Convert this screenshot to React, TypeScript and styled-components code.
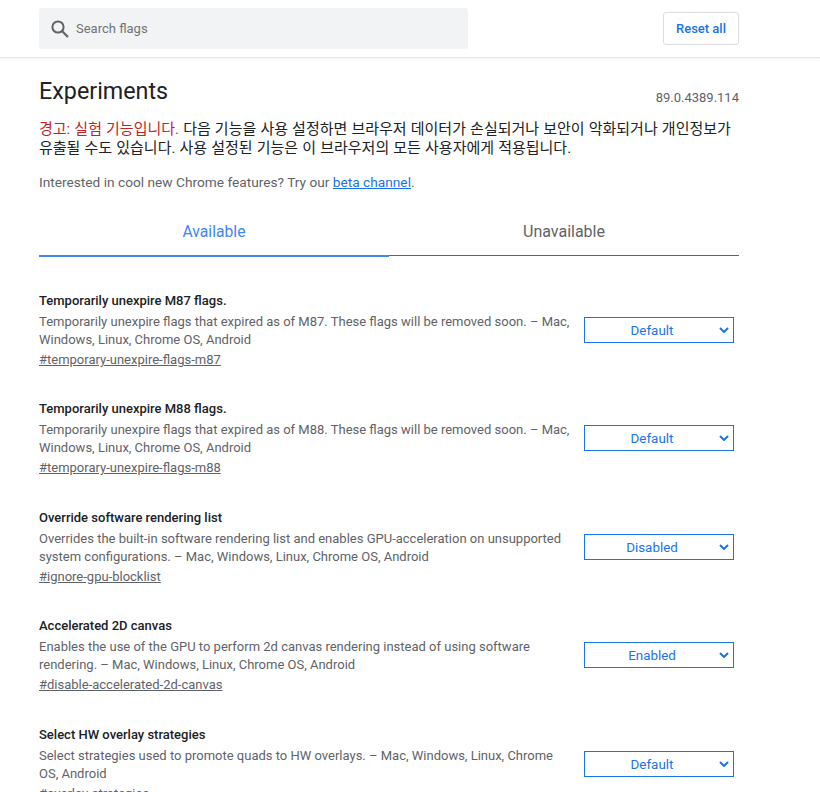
import styled, { createGlobalStyle } from "styled-components";
import { useState } from "react";

const GlobalStyle = createGlobalStyle`
  html, body {
    margin: 0;
    padding: 0;
    height: 792px;
    overflow: hidden;
    background: #fff;
    font-family: Roboto, "Noto Sans CJK KR", sans-serif;
    font-size: 13px;
    color: #5f6368;
  }
  * { box-sizing: border-box; }
`;

const Header = styled.header`
  height: 58px;
  padding: 8px 81px 0 39px;
  display: flex;
  justify-content: space-between;
  align-items: flex-start;
  border-bottom: 1px solid #e4e5e6;
  box-shadow: 0 1px 2px rgba(60, 64, 67, 0.08);
`;

const SearchBox = styled.div`
  width: 429px;
  height: 41px;
  background: #f1f3f4;
  border-radius: 3px;
  display: flex;
  align-items: center;
  padding-left: 11px;
  gap: 6px;
`;

const SearchPlaceholder = styled.span`
  font-size: 13px;
  color: #6f7377;
`;

const ResetButton = styled.button`
  margin-top: 4px;
  width: 76px;
  height: 33px;
  padding: 0;
  background: #fff;
  border: 1px solid #dadce0;
  border-radius: 3px;
  color: #1a73e8;
  font-family: inherit;
  font-size: 13px;
  font-weight: 500;
`;

const Main = styled.main`
  width: 700px;
  margin-left: 39px;
`;

const TitleRow = styled.div`
  display: flex;
  justify-content: space-between;
  align-items: flex-end;
  padding-top: 18px;
`;

const Title = styled.h1`
  margin: 0;
  font-size: 23.3px;
  font-weight: 400;
  line-height: 30px;
  color: #202124;
`;

const Version = styled.span`
  font-size: 13px;
  line-height: 17px;
  color: #5f6368;
`;

const Warning = styled.p`
  margin: 14px 0 0;
  font-size: 15px;
  line-height: 19px;
  word-spacing: 0.4px;
  color: #202124;
`;

const WarningLead = styled.span`
  color: #c5221f;
`;

const Promo = styled.p`
  margin: 15px 0 0;
  font-size: 13.7px;
  line-height: 18px;
`;

const BlueLink = styled.a`
  color: #1a73e8;
  text-decoration: underline;
`;

const Tabs = styled.div`
  display: flex;
  margin-top: 18px;
`;

const Tab = styled.div<{ $active?: boolean }>`
  width: 350px;
  padding-top: 14px;
  text-align: center;
  font-size: ${(p) => (p.$active ? "15.7px" : "16px")};
  line-height: 18px;
  color: ${(p) => (p.$active ? "#4285f4" : "#5f6368")};
  border-bottom: ${(p) => (p.$active ? "2px solid #4285f4" : "1px solid #5f6368")};
  height: ${(p) => (p.$active ? "48px" : "47px")};
`;

const FlagList = styled.div`
  padding-top: 35px;
`;

const FlagRow = styled.div`
  height: 108.4px;
  display: flex;
  justify-content: space-between;
  padding-right: 5px;
`;

const FlagText = styled.div`
  width: 531px;
`;

const FlagName = styled.h2`
  margin: 0;
  font-size: 13px;
  font-weight: 500;
  line-height: 18px;
  color: #202124;
`;

const FlagDesc = styled.p`
  margin: 3px 0 0;
  line-height: 18px;
`;

const FlagAnchor = styled.a`
  display: block;
  margin-top: 2px;
  line-height: 18px;
  color: #5f6368;
  text-decoration: underline;
`;

const SelectBox = styled.div`
  width: 150px;
  height: 26px;
  margin-top: 25px;
  padding-right: 14px;
  position: relative;
  border: 1px solid #1a73e8;
  color: #1a73e8;
  font-size: 13.4px;
  line-height: 25px;
  text-align: center;
`;

const Chevron = styled.svg`
  position: absolute;
  right: 4px;
  top: 9px;
`;

const flags = [
  {
    name: "Temporarily unexpire M87 flags.",
    desc: "Temporarily unexpire flags that expired as of M87. These flags will be removed soon. – Mac, Windows, Linux, Chrome OS, Android",
    anchor: "#temporary-unexpire-flags-m87",
    value: "Default",
  },
  {
    name: "Temporarily unexpire M88 flags.",
    desc: "Temporarily unexpire flags that expired as of M88. These flags will be removed soon. – Mac, Windows, Linux, Chrome OS, Android",
    anchor: "#temporary-unexpire-flags-m88",
    value: "Default",
  },
  {
    name: "Override software rendering list",
    desc: "Overrides the built-in software rendering list and enables GPU-acceleration on unsupported system configurations. – Mac, Windows, Linux, Chrome OS, Android",
    anchor: "#ignore-gpu-blocklist",
    value: "Disabled",
  },
  {
    name: "Accelerated 2D canvas",
    desc: "Enables the use of the GPU to perform 2d canvas rendering instead of using software rendering. – Mac, Windows, Linux, Chrome OS, Android",
    anchor: "#disable-accelerated-2d-canvas",
    value: "Enabled",
  },
  {
    name: "Select HW overlay strategies",
    desc: "Select strategies used to promote quads to HW overlays. – Mac, Windows, Linux, Chrome OS, Android",
    anchor: "#overlay-strategies",
    value: "Default",
  },
];

export default function App() {
  const [tab] = useState("available");

  return (
    <>
      <GlobalStyle />
      <Header>
        <SearchBox>
          <svg width="20" height="20" viewBox="0 0 20 20" fill="none" stroke="#5f6368">
            <circle cx="8" cy="8" r="5.6" strokeWidth="2" />
            <path d="M12 12 18 18" strokeWidth="2.2" />
          </svg>
          <SearchPlaceholder>Search flags</SearchPlaceholder>
        </SearchBox>
        <ResetButton>Reset all</ResetButton>
      </Header>
      <Main>
        <TitleRow>
          <Title>Experiments</Title>
          <Version>89.0.4389.114</Version>
        </TitleRow>
        <Warning>
          <WarningLead>경고: 실험 기능입니다.</WarningLead> 다음 기능을 사용 설정하면 브라우저 데이터가 손실되거나 보안이 악화되거나 개인정보가 유출될 수도 있습니다. 사용 설정된 기능은 이 브라우저의 모든 사용자에게 적용됩니다.
        </Warning>
        <Promo>
          Interested in cool new Chrome features? Try our <BlueLink href="#">beta channel</BlueLink>.
        </Promo>
        <Tabs>
          <Tab $active={tab === "available"}>Available</Tab>
          <Tab>Unavailable</Tab>
        </Tabs>
        <FlagList>
          {flags.map((flag) => (
            <FlagRow key={flag.anchor}>
              <FlagText>
                <FlagName>{flag.name}</FlagName>
                <FlagDesc>{flag.desc}</FlagDesc>
                <FlagAnchor href={flag.anchor}>{flag.anchor}</FlagAnchor>
              </FlagText>
              <SelectBox>
                {flag.value}
                <Chevron width="10" height="6" viewBox="0 0 10 6" fill="none" stroke="#1a73e8" strokeWidth="2">
                  <path d="M1 1 5 5 9 1" />
                </Chevron>
              </SelectBox>
            </FlagRow>
          ))}
        </FlagList>
      </Main>
    </>
  );
}
